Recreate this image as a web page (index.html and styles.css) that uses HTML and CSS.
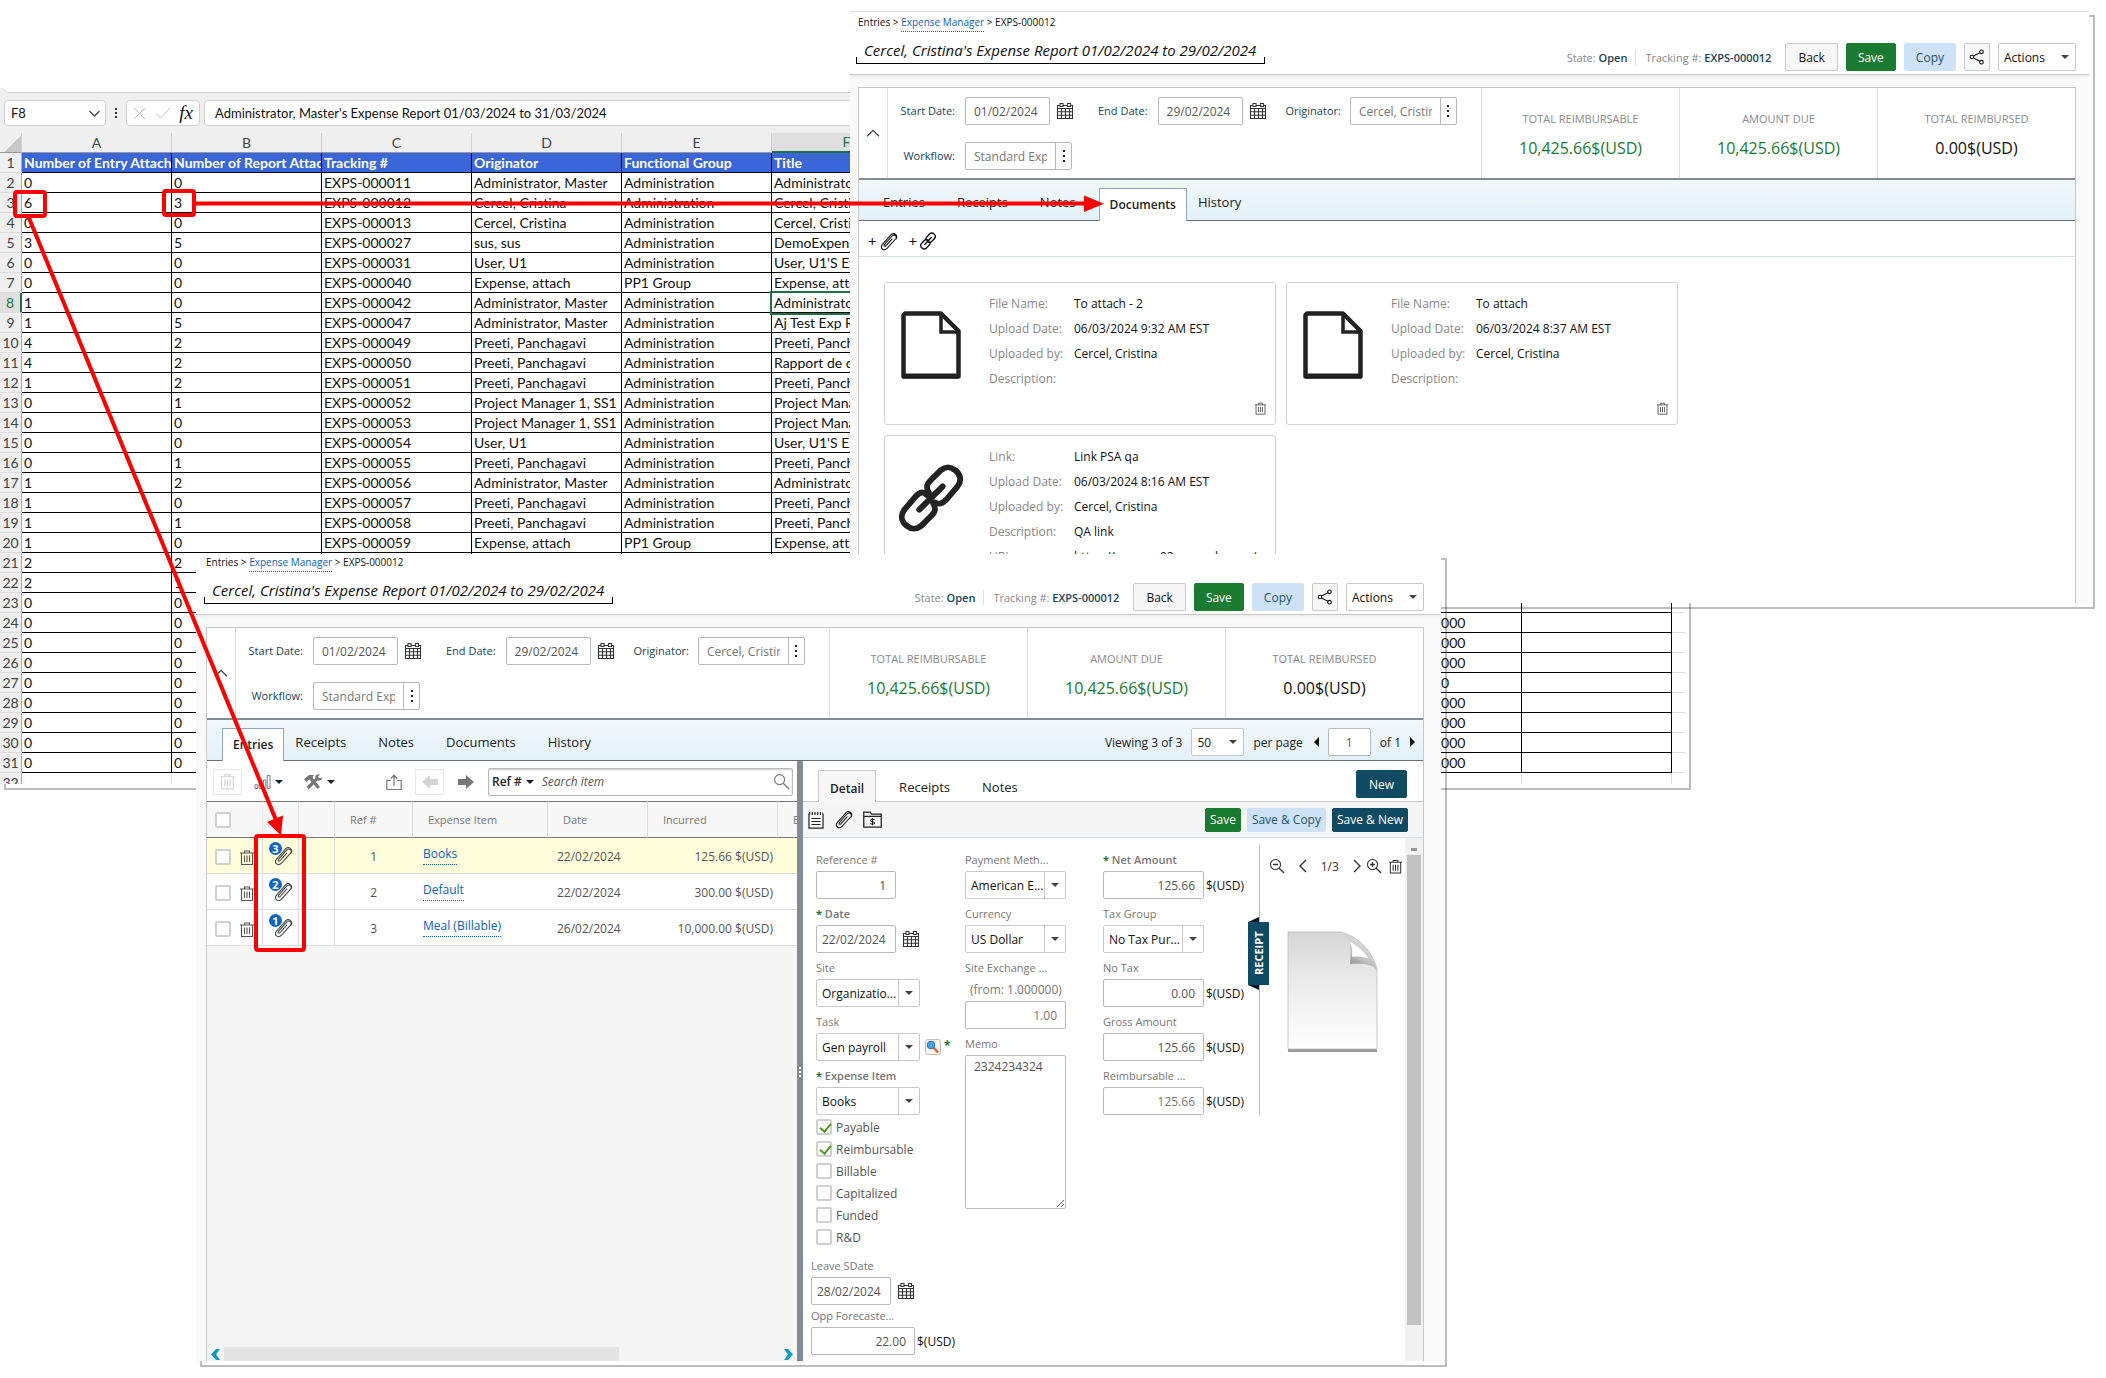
FILE: index.html
```html
<!DOCTYPE html>
<html lang="en">
<head>
  <meta charset="UTF-8" />
  <meta name="viewport" content="width=device-width, initial-scale=1.0"/>
  <title>Expense Manager - Attachments</title>
  <link rel="stylesheet" href="styles.css">
</head>
<body>
  <!-- ICONS -->
  <svg class="sprite" width="0" height="0" aria-hidden="true">
    <symbol id="i-cal" viewBox="0 0 18 18"><path d="M1.5 3.5h15v13h-15zM1.500 6.500h15M1.500 9.800h15M1.500 13.200h15M5.500 6.500v10M9.500 6.500v10M13.500 6.500v10" fill="none" stroke="currentColor" stroke-width="1.1"/><path d="M4 1.500h3v3H4zM11.500 1.500h3v3h-3z" fill="#fff" stroke="currentColor" stroke-width="1.1"/></symbol>
    <symbol id="i-trash" viewBox="0 0 16 16"><path d="M1 3.5h14M5.5 3.5v-2h5v2M2.5 3.5v11.5h11v-11.5M5.5 6v6.5M8 6v6.5M10.5 6v6.5" fill="none" stroke="currentColor" stroke-width="1.1"/></symbol>
    <symbol id="i-clip" viewBox="0 0 20 20"><path d="M13.800 7.200l-6.600 7.300c-1.200 1.300-2.600 0-1.500-1.300l8-9c2.500-2.700 6 .3 3.700 3.200l-8.900 9.800c-3.400 3.600-8-.3-4.900-4.200l6.900-7.700M10.500 5.300l2.500-2.800c2.800-2.600 7.400 1.200 4.900 4.800" fill="none" stroke="currentColor" stroke-width="1.1" stroke-linecap="round"/></symbol>
    <symbol id="i-link" viewBox="0 0 64 64"><g fill="none" stroke="currentColor" stroke-width="5.5" stroke-linecap="round" stroke-linejoin="round"><path d="M30 27c-3-5-2-8 1-11l10-10c5-4 9-4 14 0s6 10 2 15L46 34c-4 4-7 4-11 2"/><path d="M34 37c3 5 2 8-1 11L23 58c-5 4-9 4-14 0s-6-10-2-15l11-13c4-4 7-4 10-1"/><path d="M43 21L21 43"/></g></symbol>
    <symbol id="i-chain" viewBox="0 0 18 18"><g fill="none" stroke="currentColor" stroke-width="1.4" stroke-linecap="round"><path d="M8 8.500c-1.500-1.500-1.200-2.500-.2-3.500l2.700-3c1.500-1.500 3-1.300 4.500 0s1.800 3 .5 4.500l-2.800 3c-1.200 1.200-2.200 1.200-3.500.5"/><path d="M10 9.500c1.500 1.500 1.200 2.500.2 3.500l-2.700 3c-1.500 1.500-3 1.300-4.500 0s-1.800-3-.5-4.500l2.800-3c1.200-1.200 2.200-1.200 3.500-.5"/><path d="M12.300 5.500L5.700 12.500"/></g></symbol>
    <symbol id="i-file" viewBox="0 0 60 68"><path d="M4 2.500h36L57.500 20v45.500H2.500V4z" fill="none" stroke="currentColor" stroke-width="4.5" stroke-linejoin="round"/><path d="M40 3v18h17" fill="none" stroke="currentColor" stroke-width="3.5"/><path d="M2 65h56" stroke="currentColor" stroke-width="5"/></symbol>
    <symbol id="i-share" viewBox="0 0 16 16"><g fill="none" stroke="currentColor" stroke-width="1.1"><circle cx="12.5" cy="2.8" r="1.8"/><circle cx="3" cy="8" r="1.8"/><circle cx="12.5" cy="13.2" r="1.8"/><path d="M4.6 7.1l6.3-3.4M4.6 8.9l6.3 3.4"/></g></symbol>
    <symbol id="i-up" viewBox="0 0 14 8"><path d="M1 7.3l6-6 6 6" fill="none" stroke="currentColor" stroke-width="1.3"/></symbol>
    <symbol id="i-left" viewBox="0 0 8 14"><path d="M7 1L1 7l6 6" fill="none" stroke="currentColor" stroke-width="1.4"/></symbol>
    <symbol id="i-right" viewBox="0 0 8 14"><path d="M1 1l6 6-6 6" fill="none" stroke="currentColor" stroke-width="1.4"/></symbol>
    <symbol id="i-search" viewBox="0 0 18 18"><circle cx="7" cy="7" r="5.3" fill="none" stroke="currentColor" stroke-width="1.2"/><path d="M11 11l6 6" stroke="currentColor" stroke-width="1.4"/></symbol>
    <symbol id="i-out" viewBox="0 0 16 16"><circle cx="6.5" cy="6.5" r="5" fill="none" stroke="currentColor" stroke-width="1.1"/><path d="M10.2 10.2L15 15M4 6.5h5" stroke="currentColor" stroke-width="1.3"/></symbol>
    <symbol id="i-in" viewBox="0 0 16 16"><circle cx="6.5" cy="6.5" r="5" fill="none" stroke="currentColor" stroke-width="1.1"/><path d="M10.2 10.2L15 15M4 6.5h5M6.5 4v5" stroke="currentColor" stroke-width="1.3"/></symbol>
    <symbol id="i-chart" viewBox="0 0 18 16"><path d="M1 15.5v-4h3v4zM5.5 15.5v-6h3v6zM10 15.5v-9h2.5v9zM14 15.5v-14h3v14z" fill="none" stroke="currentColor"/></symbol>
    <symbol id="i-tools" viewBox="0 0 20 16"><path d="M1 5l5-4h5L9.5 3.5 17 13l-2.5 2L6.5 5.5 3.5 8z" fill="currentColor"/><path d="M19 3.5l-3 .8-1-1.800L17 .5c-3-.8-5.300 1-4.600 3.700L3.500 12.800l2.200 2.600 8.700-8.900c2.800.6 5-1 4.600-3z" fill="currentColor"/></symbol>
    <symbol id="i-export" viewBox="0 0 16 16"><path d="M5 6.5H.8v9h14.400v-9H11M8 12V1.500M4.800 4.500L8 1.200l3.200 3.300" fill="none" stroke="currentColor" stroke-width="1.2"/></symbol>
    <symbol id="i-prev" viewBox="0 0 16 14"><path d="M0 7l8-7v4h8v6H8v4z" fill="currentColor"/></symbol>
    <symbol id="i-next" viewBox="0 0 16 14"><path d="M16 7L8 0v4H0v6h8v4z" fill="currentColor"/></symbol>
    <symbol id="i-note" viewBox="0 0 16 18"><path d="M1 2.5v14.700h14V2.500M3.500 7.500h9M3.500 10.500h9M3.500 13.500h9" fill="none" stroke="currentColor" stroke-width="1.2"/><path d="M1 2.500h14" stroke="currentColor" stroke-width="3" stroke-dasharray="1.200 1.500"/></symbol>
    <symbol id="i-folder" viewBox="0 0 18 16"><path d="M.7 15.300V1h6l1.500 2H17.300v12.300zM.7 5h16.600" fill="none" stroke="currentColor" stroke-width="1.2"/><path d="M11 8.300c-1-1-3.700-.8-3.700.6 0 1.600 3.700.7 3.700 2.300 0 1.400-2.900 1.500-3.900.5M9 6.800v6.700" fill="none" stroke="currentColor"/></symbol>
    <symbol id="i-page" viewBox="0 0 92 122">
      <linearGradient id="pg" x1="0" y1="0" x2="0" y2="1"><stop offset="0" stop-color="#d6d6d6"/><stop offset=".5" stop-color="#eee"/><stop offset="1" stop-color="#fff"/></linearGradient>
      <linearGradient id="curl" x1="0" y1="1" x2=".7" y2="0"><stop offset="0" stop-color="#6a6a6a"/><stop offset=".45" stop-color="#bbb"/><stop offset="1" stop-color="#f4f4f4"/></linearGradient>
      <path d="M1 3h53c18 5 31 18 36 37v81H1z" fill="#999"/>
      <path d="M1 1h53c18 5 31 18 36 37v80H1z" fill="url(#pg)" stroke="#bbb" stroke-width=".8"/>
      <path d="M54 1c9 4 11 16 9 32 13-1 22 0 27 6C85 20 72 6 54 1z" fill="url(#curl)"/>
      <path d="M62 10c3 5 4 10 3 16 7-1 12 0 17 2-4-7-11-13-20-18z" fill="#fff"/>
    </symbol>
  </svg>

  <main class="desktop">
    <!-- SPREADSHEET -->
    <section class="window sheet-window">
      <div class="window-body sheet">
        <div class="ribbon-edge"></div>
        <div class="formula-bar">
          <div class="name-box"><input type="text" value="F8" aria-label="Name box"><svg width="11" height="7"><path d="M.5 1l5 5 5-5" fill="none" stroke="#444" stroke-width="1.3"/></svg></div>
          <span class="fx-dots"></span>
          <div class="fx-box">
            <svg width="13" height="13"><path d="M1 1l11 11M12 1L1 12" stroke="#bbb" fill="none"/></svg>
            <svg width="16" height="12"><path d="M1 6.500l4.500 4.500L15 1" stroke="#bbb" fill="none"/></svg>
            <i>fx</i>
          </div>
          <input class="fx-input" type="text" value="Administrator, Master's Expense Report 01/03/2024 to 31/03/2024" aria-label="Formula">
        </div>
        <table class="grid">
          <colgroup><col class="c-num"><col span="10" class="c-data"><col class="c-data"><col></colgroup>
          <thead>
            <tr><th class="corner"></th><th>A</th><th>B</th><th>C</th><th>D</th><th>E</th><th class="sel">F</th><th colspan="3"></th><th></th><th></th><th></th></tr>
          </thead>
          <tbody>
            <tr class="heads"><th>1</th><td>Number of Entry Attachm</td><td>Number of Report Attach</td><td>Tracking #</td><td>Originator</td><td>Functional Group</td><td>Title</td><td colspan="3"></td><td></td><td></td><td></td></tr>
            <tr><th>2</th><td>0</td><td>0</td><td>EXPS-000011</td><td>Administrator, Master</td><td>Administration</td><td>Administrator</td><td colspan="3"></td><td></td><td></td><td></td></tr>
            <tr><th>3</th><td>6</td><td>3</td><td>EXPS-000012</td><td>Cercel, Cristina</td><td>Administration</td><td>Cercel, Cristina</td><td colspan="3"></td><td></td><td></td><td></td></tr>
            <tr><th>4</th><td>0</td><td>0</td><td>EXPS-000013</td><td>Cercel, Cristina</td><td>Administration</td><td>Cercel, Cristina</td><td colspan="3"></td><td></td><td></td><td></td></tr>
            <tr><th>5</th><td>3</td><td>5</td><td>EXPS-000027</td><td>sus, sus</td><td>Administration</td><td>DemoExpense</td><td colspan="3"></td><td></td><td></td><td></td></tr>
            <tr><th>6</th><td>0</td><td>0</td><td>EXPS-000031</td><td>User, U1</td><td>Administration</td><td>User, U1'S Expense</td><td colspan="3"></td><td></td><td></td><td></td></tr>
            <tr><th>7</th><td>0</td><td>0</td><td>EXPS-000040</td><td>Expense, attach</td><td>PP1 Group</td><td>Expense, attach</td><td colspan="3"></td><td></td><td></td><td></td></tr>
            <tr class="current"><th>8</th><td>1</td><td>0</td><td>EXPS-000042</td><td>Administrator, Master</td><td>Administration</td><td class="active-cell">Administrator</td><td colspan="3"></td><td></td><td></td><td></td></tr>
            <tr><th>9</th><td>1</td><td>5</td><td>EXPS-000047</td><td>Administrator, Master</td><td>Administration</td><td>Aj Test Exp Report</td><td colspan="3"></td><td></td><td></td><td></td></tr>
            <tr><th>10</th><td>4</td><td>2</td><td>EXPS-000049</td><td>Preeti, Panchagavi</td><td>Administration</td><td>Preeti, Panchagavi</td><td colspan="3"></td><td></td><td></td><td></td></tr>
            <tr><th>11</th><td>4</td><td>2</td><td>EXPS-000050</td><td>Preeti, Panchagavi</td><td>Administration</td><td>Rapport de dépenses</td><td colspan="3"></td><td></td><td></td><td></td></tr>
            <tr><th>12</th><td>1</td><td>2</td><td>EXPS-000051</td><td>Preeti, Panchagavi</td><td>Administration</td><td>Preeti, Panchagavi</td><td colspan="3"></td><td></td><td></td><td></td></tr>
            <tr><th>13</th><td>0</td><td>1</td><td>EXPS-000052</td><td>Project Manager 1, SS1</td><td>Administration</td><td>Project Manager</td><td colspan="3"></td><td></td><td></td><td></td></tr>
            <tr><th>14</th><td>0</td><td>0</td><td>EXPS-000053</td><td>Project Manager 1, SS1</td><td>Administration</td><td>Project Manager</td><td colspan="3"></td><td></td><td></td><td></td></tr>
            <tr><th>15</th><td>0</td><td>0</td><td>EXPS-000054</td><td>User, U1</td><td>Administration</td><td>User, U1'S Expense</td><td colspan="3"></td><td></td><td></td><td></td></tr>
            <tr><th>16</th><td>0</td><td>1</td><td>EXPS-000055</td><td>Preeti, Panchagavi</td><td>Administration</td><td>Preeti, Panchagavi</td><td colspan="3"></td><td></td><td></td><td></td></tr>
            <tr><th>17</th><td>1</td><td>2</td><td>EXPS-000056</td><td>Administrator, Master</td><td>Administration</td><td>Administrator</td><td colspan="3"></td><td></td><td></td><td></td></tr>
            <tr><th>18</th><td>1</td><td>0</td><td>EXPS-000057</td><td>Preeti, Panchagavi</td><td>Administration</td><td>Preeti, Panchagavi</td><td colspan="3"></td><td></td><td></td><td></td></tr>
            <tr><th>19</th><td>1</td><td>1</td><td>EXPS-000058</td><td>Preeti, Panchagavi</td><td>Administration</td><td>Preeti, Panchagavi</td><td colspan="3"></td><td></td><td></td><td></td></tr>
            <tr><th>20</th><td>1</td><td>0</td><td>EXPS-000059</td><td>Expense, attach</td><td>PP1 Group</td><td>Expense, attach</td><td colspan="3"></td><td></td><td></td><td></td></tr>
            <tr><th>21</th><td>2</td><td>2</td><td></td><td></td><td></td><td></td><td colspan="3"></td><td></td><td></td><td></td></tr>
            <tr><th>22</th><td>2</td><td>1</td><td></td><td></td><td></td><td></td><td colspan="3"></td><td></td><td></td><td></td></tr>
            <tr><th>23</th><td>0</td><td>0</td><td></td><td></td><td></td><td></td><td colspan="3"></td><td></td><td></td><td></td></tr>
            <tr><th>24</th><td>0</td><td>0</td><td></td><td></td><td></td><td></td><td colspan="3"></td><td class="rate">000</td><td></td><td></td></tr>
            <tr><th>25</th><td>0</td><td>0</td><td></td><td></td><td></td><td></td><td colspan="3"></td><td class="rate">000</td><td></td><td></td></tr>
            <tr><th>26</th><td>0</td><td>0</td><td></td><td></td><td></td><td></td><td colspan="3"></td><td class="rate">000</td><td></td><td></td></tr>
            <tr><th>27</th><td>0</td><td>0</td><td></td><td></td><td></td><td></td><td colspan="3"></td><td class="rate">0</td><td></td><td></td></tr>
            <tr><th>28</th><td>0</td><td>0</td><td></td><td></td><td></td><td></td><td colspan="3"></td><td class="rate">000</td><td></td><td></td></tr>
            <tr><th>29</th><td>0</td><td>0</td><td></td><td></td><td></td><td></td><td colspan="3"></td><td class="rate">000</td><td></td><td></td></tr>
            <tr><th>30</th><td>0</td><td>0</td><td></td><td></td><td></td><td></td><td colspan="3"></td><td class="rate">000</td><td></td><td></td></tr>
            <tr><th>31</th><td>0</td><td>0</td><td></td><td></td><td></td><td></td><td colspan="3"></td><td class="rate">000</td><td></td><td></td></tr>
            <tr class="blank"><th>32</th><td></td><td></td><td></td><td></td><td></td><td></td><td colspan="3"></td><td></td><td></td><td></td></tr>
          </tbody>
        </table>
      </div>
    </section>

    <!-- REPORT: DOCUMENTS TAB -->
    <section class="window docs-window">
      <div class="window-body app">
        <header class="app-header">
          <div class="heading">
            <nav class="crumbs">Entries &gt; <a href="#">Expense Manager</a> &gt; EXPS-000012</nav>
            <input class="report-title" type="text" aria-label="Report title" value="Cercel, Cristina's Expense Report 01/02/2024 to 29/02/2024">
          </div>
          <div class="header-actions">
            <span class="meta">State: <b>Open</b></span><span class="meta sep">Tracking #: <b>EXPS-000012</b></span>
            <button class="btn">Back</button>
            <button class="btn green">Save</button>
            <button class="btn pale">Copy</button>
            <button class="btn icon-btn" aria-label="Share"><svg width="16" height="16"><use href="#i-share"/></svg></button>
            <span class="select actions"><select aria-label="Actions"><option>Actions</option></select></span>
          </div>
        </header>
        <div class="panel">
          <div class="summary">
            <button class="collapse" aria-label="Collapse"><svg width="14" height="8"><use href="#i-up"/></svg></button>
            <div class="fields">
              <div class="line">
                <label class="first" for="d-start">Start Date:</label><input class="box date" id="d-start" type="text" value="01/02/2024"><button class="cal" aria-label="Pick start date"><svg width="18" height="18"><use href="#i-cal"/></svg></button>
                <label class="end" for="d-end">End Date:</label><input class="box date" id="d-end" type="text" value="29/02/2024"><button class="cal" aria-label="Pick end date"><svg width="18" height="18"><use href="#i-cal"/></svg></button>
                <label class="orig" for="d-orig">Originator:</label><span class="lookup"><input id="d-orig" type="text" value="Cercel, Cristina"><button aria-label="Choose originator"></button></span>
              </div>
              <div class="line">
                <label class="first" for="d-flow">Workflow:</label><span class="lookup"><input id="d-flow" type="text" value="Standard Expense"><button aria-label="Choose workflow"></button></span>
              </div>
            </div>
            <div class="stat"><span>TOTAL REIMBURSABLE</span><strong class="pos">10,425.66$(USD)</strong></div>
            <div class="stat"><span>AMOUNT DUE</span><strong class="pos">10,425.66$(USD)</strong></div>
            <div class="stat"><span>TOTAL REIMBURSED</span><strong>0.00$(USD)</strong></div>
          </div>
          <nav class="tabs">
            <a href="#">Entries</a><a href="#">Receipts</a><a href="#">Notes</a><a href="#" class="active">Documents</a><a href="#">History</a>
          </nav>
          <div class="doc-tools">
            <button aria-label="Add file">+<svg width="19" height="19"><use href="#i-clip"/></svg></button>
            <button aria-label="Add link">+<svg width="18" height="18"><use href="#i-chain"/></svg></button>
          </div>
          <div class="cards">
            <article class="card">
              <svg width="60" height="68"><use href="#i-file"/></svg>
              <dl><dt>File Name:</dt><dd>To attach - 2</dd><dt>Upload Date:</dt><dd>06/03/2024 9:32 AM EST</dd><dt>Uploaded by:</dt><dd>Cercel, Cristina</dd><dt>Description:</dt><dd></dd></dl>
              <button class="del" aria-label="Delete"><svg width="13" height="13"><use href="#i-trash"/></svg></button>
            </article>
            <article class="card">
              <svg width="60" height="68"><use href="#i-file"/></svg>
              <dl><dt>File Name:</dt><dd>To attach</dd><dt>Upload Date:</dt><dd>06/03/2024 8:37 AM EST</dd><dt>Uploaded by:</dt><dd>Cercel, Cristina</dd><dt>Description:</dt><dd></dd></dl>
              <button class="del" aria-label="Delete"><svg width="13" height="13"><use href="#i-trash"/></svg></button>
            </article>
            <article class="card link-card">
              <svg width="68" height="68"><use href="#i-link"/></svg>
              <dl><dt>Link:</dt><dd>Link PSA qa</dd><dt>Upload Date:</dt><dd>06/03/2024 8:16 AM EST</dd><dt>Uploaded by:</dt><dd>Cercel, Cristina</dd><dt>Description:</dt><dd>QA link</dd><dt>URL:</dt><dd>https://www.qa92.example.com/</dd></dl>
            </article>
          </div>
        </div>
      </div>
    </section>

    <!-- REPORT: ENTRIES TAB -->
    <section class="window entries-window">
      <div class="window-body app">
        <header class="app-header">
          <div class="heading">
            <nav class="crumbs">Entries &gt; <a href="#">Expense Manager</a> &gt; EXPS-000012</nav>
            <input class="report-title" type="text" aria-label="Report title" value="Cercel, Cristina's Expense Report 01/02/2024 to 29/02/2024">
          </div>
          <div class="header-actions">
            <span class="meta">State: <b>Open</b></span><span class="meta sep">Tracking #: <b>EXPS-000012</b></span>
            <button class="btn">Back</button>
            <button class="btn green">Save</button>
            <button class="btn pale">Copy</button>
            <button class="btn icon-btn" aria-label="Share"><svg width="16" height="16"><use href="#i-share"/></svg></button>
            <span class="select actions"><select aria-label="Actions"><option>Actions</option></select></span>
          </div>
        </header>
        <div class="panel">
          <div class="summary">
            <button class="collapse" aria-label="Collapse"><svg width="14" height="8"><use href="#i-up"/></svg></button>
            <div class="fields">
              <div class="line">
                <label class="first" for="e-start">Start Date:</label><input class="box date" id="e-start" type="text" value="01/02/2024"><button class="cal" aria-label="Pick start date"><svg width="18" height="18"><use href="#i-cal"/></svg></button>
                <label class="end" for="e-end">End Date:</label><input class="box date" id="e-end" type="text" value="29/02/2024"><button class="cal" aria-label="Pick end date"><svg width="18" height="18"><use href="#i-cal"/></svg></button>
                <label class="orig" for="e-orig">Originator:</label><span class="lookup"><input id="e-orig" type="text" value="Cercel, Cristina"><button aria-label="Choose originator"></button></span>
              </div>
              <div class="line">
                <label class="first" for="e-flow">Workflow:</label><span class="lookup"><input id="e-flow" type="text" value="Standard Expense"><button aria-label="Choose workflow"></button></span>
              </div>
            </div>
            <div class="stat"><span>TOTAL REIMBURSABLE</span><strong class="pos">10,425.66$(USD)</strong></div>
            <div class="stat"><span>AMOUNT DUE</span><strong class="pos">10,425.66$(USD)</strong></div>
            <div class="stat"><span>TOTAL REIMBURSED</span><strong>0.00$(USD)</strong></div>
          </div>
          <nav class="tabs">
            <a href="#" class="active">Entries</a><a href="#">Receipts</a><a href="#">Notes</a><a href="#">Documents</a><a href="#">History</a>
            <div class="pager">
              <label for="per">Viewing 3 of 3</label>
              <span class="select per"><select id="per"><option>50</option></select></span>
              <label for="page">per page</label>
              <button class="tri back" aria-label="Previous page"></button>
              <input class="box" id="page" type="text" value="1">
              <span>of 1</span>
              <button class="tri" aria-label="Next page"></button>
            </div>
          </nav>
          <div class="split">
            <!-- entry list -->
            <div class="list">
              <div class="list-tools">
                <button class="framed" aria-label="Delete" disabled><svg width="17" height="17"><use href="#i-trash"/></svg></button>
                <button class="drop t-chart" aria-label="Charts"><svg width="17" height="15"><use href="#i-chart"/></svg></button>
                <button class="drop t-tools" aria-label="Tools"><svg width="20" height="16"><use href="#i-tools"/></svg></button>
                <button class="t-export" aria-label="Export"><svg width="16" height="16"><use href="#i-export"/></svg></button>
                <button class="framed" aria-label="Previous" disabled><svg width="16" height="14"><use href="#i-prev"/></svg></button>
                <button class="t-next" aria-label="Next"><svg width="16" height="14"><use href="#i-next"/></svg></button>
                <div class="search"><button class="drop ref">Ref #</button><input type="text" placeholder="Search item" aria-label="Search item"><svg width="17" height="17"><use href="#i-search"/></svg></div>
              </div>
              <table class="entries">
                <colgroup><col class="w-a"><col class="w-b"><col class="w-b"><col class="w-ref"><col class="w-item"><col class="w-date"><col class="w-inc"><col></colgroup>
                <thead>
                  <tr><th><input type="checkbox" aria-label="Select all"></th><th></th><th></th><th>Ref #</th><th>Expense Item</th><th>Date</th><th>Incurred</th><th>Bill</th></tr>
                </thead>
                <tbody>
                  <tr class="picked"><td><input type="checkbox" aria-label="Select entry 1"><button aria-label="Delete entry 1"><svg width="16" height="17"><use href="#i-trash"/></svg></button></td><td class="att"><svg width="20" height="20"><use href="#i-clip"/></svg><span class="badge">3</span></td><td></td><td class="num">1</td><td class="item"><a href="#">Books</a></td><td class="day">22/02/2024</td><td class="sum">125.66 $(USD)</td><td></td></tr>
                  <tr><td><input type="checkbox" aria-label="Select entry 2"><button aria-label="Delete entry 2"><svg width="16" height="17"><use href="#i-trash"/></svg></button></td><td class="att"><svg width="20" height="20"><use href="#i-clip"/></svg><span class="badge">2</span></td><td></td><td class="num">2</td><td class="item"><a href="#">Default</a></td><td class="day">22/02/2024</td><td class="sum">300.00 $(USD)</td><td></td></tr>
                  <tr><td><input type="checkbox" aria-label="Select entry 3"><button aria-label="Delete entry 3"><svg width="16" height="17"><use href="#i-trash"/></svg></button></td><td class="att"><svg width="20" height="20"><use href="#i-clip"/></svg><span class="badge">1</span></td><td></td><td class="num">3</td><td class="item"><a href="#">Meal (Billable)</a></td><td class="day">26/02/2024</td><td class="sum">10,000.00 $(USD)</td><td></td></tr>
                </tbody>
              </table>
              <div class="h-scroll">
                <svg width="10" height="11"><path d="M5 0h4L5 5.500 9 11H5L0 5.500z"/></svg>
                <div class="h-track"><div class="h-thumb"></div></div>
                <svg width="10" height="11"><path d="M5 0H1l4 5.500L1 11h4l5-5.500z"/></svg>
              </div>
            </div>
            <div class="splitter"></div>
            <!-- entry detail -->
            <div class="detail">
              <nav class="sub-tabs">
                <a href="#" class="active">Detail</a><a href="#">Receipts</a><a href="#">Notes</a>
                <button class="btn navy">New</button>
              </nav>
              <div class="detail-tools">
                <button aria-label="Notes"><svg width="16" height="18"><use href="#i-note"/></svg></button>
                <button aria-label="Attachments"><svg width="19" height="19"><use href="#i-clip"/></svg></button>
                <button aria-label="Project billing"><svg width="19" height="17"><use href="#i-folder"/></svg></button>
                <button class="btn small green">Save</button>
                <button class="btn small pale">Save &amp; Copy</button>
                <button class="btn small navy">Save &amp; New</button>
              </div>
              <div class="scroll-area">
                <form class="entry-form">
                  <div class="col">
                    <div class="field"><label for="f-ref">Reference #</label><input class="box short num" id="f-ref" type="text" value="1"></div>
                    <div class="field"><label class="req" for="f-date">Date</label><div class="line"><input class="box short" id="f-date" type="text" value="22/02/2024"><button type="button" class="cal" aria-label="Pick date"><svg width="18" height="18"><use href="#i-cal"/></svg></button></div></div>
                    <div class="field"><label for="f-site">Site</label><span class="select split-arrow"><select id="f-site"><option>Organizatio...</option></select></span></div>
                    <div class="field"><label for="f-task">Task</label><div class="line"><span class="select split-arrow"><select id="f-task"><option>Gen payroll</option></select></span><button type="button" class="find" aria-label="Find task"><svg width="16" height="16"><rect x=".5" y=".5" width="15" height="15" rx="2" fill="#f4f1ea" stroke="#c5beb0"/><path d="M8.500 8.500l4.500 5" stroke="#e2672d" stroke-width="2.5"/><circle cx="6" cy="6" r="3.8" fill="#4aa3e8" stroke="#2b6fb8"/></svg></button><span class="star">*</span></div></div>
                    <div class="field"><label class="req" for="f-item">Expense Item</label><span class="select split-arrow"><select id="f-item"><option>Books</option></select></span></div>
                    <div class="checks">
                      <label><input type="checkbox" checked>Payable</label>
                      <label><input type="checkbox" checked>Reimbursable</label>
                      <label><input type="checkbox">Billable</label>
                      <label><input type="checkbox">Capitalized</label>
                      <label><input type="checkbox">Funded</label>
                      <label><input type="checkbox">R&amp;D</label>
                    </div>
                  </div>
                  <div class="col">
                    <div class="field"><label for="f-pay">Payment Meth...</label><span class="select split-arrow"><select id="f-pay"><option>American E...</option></select></span></div>
                    <div class="field"><label for="f-cur">Currency</label><span class="select split-arrow"><select id="f-cur"><option>US Dollar</option></select></span></div>
                    <div class="field"><label for="f-rate">Site Exchange ...</label><span class="hint">(from: 1.000000)</span><input class="box num dim" id="f-rate" type="text" value="1.00"></div>
                    <div class="field"><label for="f-memo">Memo</label><textarea class="box" id="f-memo">2324234324</textarea></div>
                  </div>
                  <div class="col amounts">
                    <div class="field"><label class="req" for="f-net">Net Amount</label><div class="line"><input class="box num" id="f-net" type="text" value="125.66"><span>$(USD)</span></div></div>
                    <div class="field"><label for="f-tax">Tax Group</label><span class="select split-arrow"><select id="f-tax"><option>No Tax Pur...</option></select></span></div>
                    <div class="field"><label for="f-notax">No Tax</label><div class="line"><input class="box num" id="f-notax" type="text" value="0.00"><span>$(USD)</span></div></div>
                    <div class="field"><label for="f-gross">Gross Amount</label><div class="line"><input class="box num" id="f-gross" type="text" value="125.66"><span>$(USD)</span></div></div>
                    <div class="field"><label for="f-reim">Reimbursable ...</label><div class="line"><input class="box num dim" id="f-reim" type="text" value="125.66"><span>$(USD)</span></div></div>
                  </div>
                  <aside class="receipt">
                    <div class="flag"><span>RECEIPT</span></div>
                    <div class="receipt-tools">
                      <button type="button" aria-label="Zoom out"><svg width="16" height="16"><use href="#i-out"/></svg></button>
                      <div class="steps">
                        <button type="button" aria-label="Previous receipt"><svg width="8" height="14"><use href="#i-left"/></svg></button>
                        <span>1/3</span>
                        <button type="button" aria-label="Next receipt"><svg width="8" height="14"><use href="#i-right"/></svg></button>
                      </div>
                      <button type="button" aria-label="Zoom in"><svg width="16" height="16"><use href="#i-in"/></svg></button>
                      <button type="button" aria-label="Delete receipt"><svg width="15" height="17"><use href="#i-trash"/></svg></button>
                    </div>
                    <svg class="page" width="92" height="122"><use href="#i-page"/></svg>
                  </aside>
                  <div class="extra">
                    <div class="field"><label for="f-leave">Leave SDate</label><div class="line"><input class="box short" id="f-leave" type="text" value="28/02/2024"><button type="button" class="cal" aria-label="Pick leave date"><svg width="18" height="18"><use href="#i-cal"/></svg></button></div></div>
                    <div class="field"><label for="f-opp">Opp Forecaste...</label><div class="line"><input class="box num opp" id="f-opp" type="text" value="22.00"><span>$(USD)</span></div></div>
                  </div>
                </form>
                <div class="v-track"><div class="v-thumb"></div></div>
              </div>
            </div>
          </div>
        </div>
      </div>
    </section>

    <!-- CALLOUTS -->
    <svg class="callouts" aria-hidden="true">
      <g fill="none" stroke="red" stroke-width="4">
        <rect x="15" y="192" width="30" height="24" rx="2"/>
        <rect x="164" y="191" width="30" height="24" rx="2"/>
        <rect x="256" y="836" width="48" height="114" rx="2"/>
        <path d="M196 203.500H1086M29 218L276 820"/>
      </g>
      <path d="M1084 195.500v16.500l20-8.200zM267 822l16-6.500-2 20z" fill="red"/>
    </svg>
  </main>
</body>
</html>
```
FILE: styles.css
```css
:root {
  --line: #c8c8c8;
  --soft-line: #d9e0e4;
  --text: #111;
  --muted: #777;
  --link: #0c5fbf;
  --green: #197b30;
  --navy: #0f4a63;
  --pale: #cde2f7;
  --slate: #818c96;
}

* {
  box-sizing: border-box;
}

body {
  margin: 0;
  background: #fff;
  color: var(--text);
  font-family: "Open Sans", sans-serif;
  font-size: 12px;
}

button, input, select, textarea {
  font: inherit;
  color: inherit;
  margin: 0;
}

button {
  background: none;
  border: 0;
  padding: 0;
}

input, select, textarea {
  border: 0;
  outline: 0;
  min-width: 0;
  background: none;
}

svg {
  display: block;
}

.sprite {
  position: absolute;
}

.desktop {
  position: relative;
  min-height: 100vh;
  overflow: hidden;
}

/* windows */
.window {
  position: absolute;
}

.window::before {
  content: "";
  position: absolute;
  top: 4px;
  left: 4px;
  right: -6px;
  bottom: -6px;
  border: 2px solid rgba(0, 0, 0, 0.26);
}

.window-body {
  position: relative;
  height: 100%;
  overflow: hidden;
}

.sheet-window {
  left: 0;
  right: 421px;
  top: 88px;
  height: 696px;
}

.docs-window {
  left: 850px;
  right: 17px;
  top: 11px;
  height: 592px;
}

.entries-window {
  left: 196px;
  right: 665px;
  top: 554px;
  height: 807px;
}

.callouts {
  position: absolute;
  inset: 0;
  width: 100%;
  height: 100%;
  pointer-events: none;
}

/* spreadsheet */
.sheet {
  background: #efefef;
  font-family: Lato, sans-serif;
  font-size: 14px;
  font-variant-ligatures: none;
}

.ribbon-edge {
  height: 5px;
  margin-left: 4px;
  background: #fff;
  border-bottom: 1px solid #cfcfcf;
  border-bottom-left-radius: 5px;
}

.formula-bar {
  display: flex;
  align-items: center;
  height: 40px;
  padding: 0 0 0 4px;
  background: #efefef;
}

.name-box, .fx-box, .fx-input {
  height: 26px;
  background: #fff;
  border: 1px solid #d0d0d0;
  border-radius: 4px;
  font-size: 13px;
}

.name-box {
  display: flex;
  align-items: center;
  width: 102px;
  padding: 0 5px 0 6px;
}

.name-box input {
  flex: 1;
  padding: 0;
}

.fx-dots {
  width: 2px;
  height: 10px;
  margin: 0 9px;
  background: repeating-linear-gradient(#333 0 2px, transparent 2px 4px);
}

.fx-box {
  display: flex;
  align-items: center;
  gap: 9px;
  width: 74px;
  margin-right: 4px;
  padding: 0 6px;
}

.fx-box i {
  font: italic 19px "Liberation Serif", serif;
}

.fx-input {
  flex: 1;
  padding: 0 10px;
}

.grid {
  width: 100%;
  table-layout: fixed;
  border-collapse: separate;
  border-spacing: 0;
}

.c-num {
  width: 22px;
}

.c-data {
  width: 150px;
}

.grid th {
  height: 20px;
  padding: 0;
  background: #efefef;
  border-right: 1px solid #aaa;
  border-bottom: 1px solid #ddd;
  color: #444;
  font-weight: normal;
  line-height: 18px;
}

.grid thead th {
  border-right-color: #d0d0d0;
  border-bottom-color: #999;
}

.grid .corner {
  background: linear-gradient(135deg, #efefef 60%, #c8c8c8 60%);
}

.grid thead .sel {
  background: #dfdfdf;
  color: #1e7145;
  border-bottom: 2px solid #1e7145;
}

.grid td {
  height: 20px;
  padding: 0 0 0 2px;
  background: #fff;
  border-right: 1px solid #000;
  border-bottom: 1px solid #000;
  line-height: 19px;
  white-space: nowrap;
  overflow: hidden;
}

.grid td:last-child {
  border-color: #ddd;
  border-right: 0;
}

.grid .heads td {
  background: #3a66d7;
  color: #fff;
  font-weight: bold;
}

.grid .current th {
  background: #dfdfdf;
  color: #1e7145;
  border-right: 2px solid #1e7145;
}

.grid .active-cell {
  outline: 2px solid #1e7145;
}

.grid .rate {
  padding-left: 69px;
}

.grid .blank td {
  border-color: #ddd;
}

/* report app */
.app {
  display: flex;
  flex-direction: column;
  background: #f9f9f9;
}

.app-header {
  display: flex;
  align-items: flex-end;
  justify-content: space-between;
  flex: none;
  height: 61px;
  padding: 0 13px 3px 6px;
  background: #fff;
  border-bottom: 1px solid var(--line);
  box-shadow: 0 2px 3px #eee;
}

.docs-window .app-header {
  height: 64px;
  border-top: 1px solid #ddd;
}

.entries-window .app-header {
  padding: 0 17px 3px 8px;
}

.heading {
  align-self: flex-end;
  padding-bottom: 7px;
}

.crumbs {
  padding-left: 2px;
  font-size: 10px;
  line-height: 16px;
}

.crumbs a, .item a {
  color: var(--link);
  text-decoration: none;
  border-bottom: 1px dotted var(--link);
  padding-bottom: 2px;
}

.report-title {
  display: block;
  width: 409px;
  height: 25px;
  margin-top: 9px;
  padding: 0 8px 2px;
  font-size: 15px;
  font-style: italic;
  background:
    linear-gradient(#000, #000) left bottom / 1px 6px no-repeat,
    linear-gradient(#000, #000) right bottom / 1px 6px no-repeat;
  border-bottom: 1px solid #000;
}

.header-actions {
  display: flex;
  align-items: center;
  gap: 8px;
}

.meta {
  color: #8a8a8a;
  font-size: 11px;
}

.meta b {
  color: #17445a;
  font-weight: 600;
}

.meta.sep {
  margin-right: 6px;
  padding-left: 9px;
  border-left: 1px solid var(--soft-line);
}

.btn {
  height: 28px;
  padding: 0 12px;
  border-radius: 2px;
  background: #f7f7f7;
  border: 1px solid var(--line);
}

.btn.green {
  padding: 0 11px;
  background: var(--green);
  border-color: var(--green);
  color: #fff;
}

.btn.pale {
  padding: 0 11px;
  background: var(--pale);
  border-color: var(--pale);
  color: #24516e;
}

.btn.navy {
  background: var(--navy);
  border-color: var(--navy);
  color: #fff;
}

.btn.icon-btn {
  width: 26px;
  padding: 0 4px;
}

.btn.small {
  height: 24px;
  padding: 0 4px;
}

.select {
  position: relative;
  display: block;
  height: 28px;
  background: #fff;
  border: 1px solid var(--line);
  border-radius: 2px;
}

.select select {
  width: 100%;
  height: 100%;
  padding: 0 5px;
  appearance: none;
}

/* drop-down arrow */
.select::after {
  content: "";
  position: absolute;
  right: 6px;
  top: 11px;
  border: 4px solid transparent;
  border-top-color: #444;
  border-bottom: 0;
  pointer-events: none;
}

.split-arrow::before {
  content: "";
  position: absolute;
  right: 20px;
  top: 0;
  bottom: 0;
  border-left: 1px solid var(--line);
}

.actions {
  width: 78px;
}

.box {
  height: 28px;
  padding: 0 8px;
  background: #fff;
  border: 1px solid #b9b9b9;
  border-radius: 2px;
  color: #555;
}

.num {
  text-align: right;
}

.dim {
  color: var(--muted);
}

.panel {
  display: flex;
  flex-direction: column;
  flex: 1;
  margin: 12px 13px 0 8px;
  background: #fff;
  border: 1px solid var(--line);
  border-bottom: 0;
}

.entries-window .panel {
  margin: 12px 17px 0 10px;
}

.summary {
  display: flex;
  border-bottom: 2px solid var(--slate);
}

.collapse {
  width: 29px;
  padding-left: 7px;
  border-right: 1px solid var(--soft-line);
  color: #444;
}

.fields {
  display: flex;
  flex: 1;
  flex-direction: column;
  gap: 17px;
  padding: 9px 0 8px;
}

.line {
  display: flex;
  align-items: center;
}

.fields label {
  margin-right: 10px;
  padding-bottom: 2px;
  color: #17445a;
  font-size: 11px;
  white-space: nowrap;
}

.fields .first {
  width: 67px;
  text-align: right;
}

.fields .end {
  margin-left: 24px;
}

.fields .orig {
  margin-left: 19px;
  margin-right: 9px;
}

.date {
  width: 85px;
}

.cal {
  margin-left: 6px;
  color: #333;
}

.lookup {
  display: flex;
  width: 107px;
  height: 28px;
  border: 1px solid #b9b9b9;
  border-radius: 2px;
}

.lookup input {
  flex: 1;
  margin: 0 8px;
  padding: 0;
  color: var(--muted);
}

.lookup button {
  width: 16px;
  border-left: 1px solid #b9b9b9;
  background: repeating-linear-gradient(#222 0 2px, transparent 2px 5px) center / 2px 12px no-repeat;
}

.stat {
  display: flex;
  flex-direction: column;
  align-items: center;
  width: 198px;
  padding-top: 23px;
  border-left: 1px solid var(--soft-line);
}

.stat span {
  color: #8a8a8a;
  font-size: 11px;
  line-height: 16px;
}

.stat strong {
  margin-top: 9px;
  font-size: 16px;
  font-weight: normal;
  line-height: 24px;
}

.stat .pos {
  color: var(--green);
}

.tabs {
  display: flex;
  flex: none;
  height: 41px;
  padding: 8px 8px 0 8px;
  background: linear-gradient(#f0f9fa, #e4f1f9);
  border-bottom: 1px solid #6b7078;
}

.tabs a, .sub-tabs a {
  padding: 0 16px;
  color: #222;
  font-size: 13px;
  line-height: 29px;
  text-decoration: none;
}

.tabs .active {
  height: 33px;
  margin: 0 -5px 0 7px;
  padding: 0 10px;
  background: #fff;
  border: 1px solid #8ea6c4;
  border-bottom: 0;
  font-size: 12px;
  font-weight: 600;
  line-height: 32px;
}

.pager {
  display: flex;
  align-items: center;
  gap: 9px;
  height: 28px;
  margin-left: auto;
  color: #222;
}

.per {
  width: 53px;
}

#page {
  width: 43px;
  text-align: center;
}

.tri {
  width: 5px;
  border: 5px solid transparent;
  border-left-color: #111;
  border-right: 0;
}

.tri.back {
  margin: 0 0 0 2px;
  border: 5px solid transparent;
  border-right-color: #111;
  border-left: 0;
}

/* documents */
.doc-tools {
  display: flex;
  gap: 11px;
  height: 36px;
  padding: 5px 0 0 9px;
  border-bottom: 1px solid var(--soft-line);
}

.doc-tools button {
  display: flex;
  align-items: center;
  gap: 2px;
  font-size: 15px;
}

.cards {
  display: grid;
  grid-template-columns: 392px 392px;
  gap: 10px;
  padding: 25px;
}

.card {
  position: relative;
  display: flex;
  align-items: flex-start;
  min-height: 143px;
  padding: 8px 16px;
  border: 1px solid #d2d2d2;
  border-radius: 3px;
}

.card > svg {
  flex: none;
  margin: 20px 28px 0 0;
  color: #222;
}

.link-card {
  padding-left: 12px;
}

.link-card > svg {
  margin-right: 24px;
}

.card dl {
  display: grid;
  grid-template-columns: 85px 1fr;
  margin: 0;
  line-height: 25px;
}

.card dt {
  color: #888;
}

.card dd {
  margin: 0;
}

.del {
  position: absolute;
  right: 8px;
  bottom: 9px;
  color: #555;
}

/* entries */
.split {
  display: flex;
  flex: 1;
}

.list {
  display: flex;
  flex-direction: column;
  width: 590px;
  background: #f5f5f5;
}

.list-tools {
  display: flex;
  align-items: center;
  height: 40px;
  padding: 1px 4px 0 6px;
  background: #fff;
  color: #777;
}

.framed {
  display: flex;
  align-items: center;
  justify-content: center;
  width: 29px;
  height: 26px;
  border: 1px solid #e8e8e8;
  color: #d5d5d5;
}

.drop {
  display: flex;
  align-items: center;
  gap: 4px;
}

.drop::after {
  content: "";
  border: 4px solid transparent;
  border-top-color: #123;
  border-bottom: 0;
}

.t-chart {
  margin-left: 12px;
}

.t-tools {
  margin-left: 20px;
}

.t-export {
  margin: 0 13px 0 51px;
}

.t-next {
  margin: 0 14px 0 14px;
}

.search {
  display: flex;
  align-items: center;
  flex: 1;
  height: 28px;
  padding: 0 2px 0 3px;
  border: 1px solid #b9b9b9;
  border-radius: 2px;
  box-shadow: inset 0 1px 2px #ccc;
}

.search input {
  flex: 1;
  padding: 0 8px;
}

.search input::placeholder {
  color: #555;
  font-style: italic;
}

.ref {
  color: #222;
  font-weight: 600;
}

.entries {
  width: 100%;
  table-layout: fixed;
  border-collapse: separate;
  border-spacing: 0;
}

.w-a { width: 56px; }
.w-b { width: 36px; }
.w-ref { width: 78px; }
.w-item { width: 135px; }
.w-date { width: 100px; }
.w-inc { width: 130px; }

.entries th {
  height: 37px;
  padding: 0 0 0 15px;
  border: solid #ddd;
  border-width: 1px 1px 1px 0;
  border-top-color: #777;
  border-bottom-color: #777;
  background: #f7f7f7;
  color: var(--muted);
  font-size: 11px;
  font-weight: normal;
  text-align: left;
  overflow: hidden;
}

.entries th:first-child {
  padding-left: 8px;
  border-right-color: #eee;
}

.entries th:last-child {
  border-right: 0;
}

.entries td {
  height: 36px;
  padding: 2px 0 0;
  background: #fff;
  border-bottom: 1px solid #ddd;
  color: #555;
}

.entries .picked td {
  background: #ffffdb;
}

.entries td:nth-child(-n+3) {
  border-right: 1px solid #ddd;
}

.entries td:first-child button {
  margin-left: 8px;
  color: #555;
  vertical-align: middle;
}

.entries td:first-child {
  padding-left: 8px;
}

input[type="checkbox"] {
  appearance: none;
  width: 16px;
  height: 16px;
  background: #fff;
  border: 2px solid #d0d0d0;
  border-radius: 2px;
  vertical-align: middle;
}

input[type="checkbox"]:checked::before {
  content: "";
  display: block;
  width: 5px;
  height: 9px;
  margin: 0 0 0 4px;
  border: solid #4c9a1a;
  border-width: 0 2px 2px 0;
  transform: rotate(40deg);
}

.entries .att {
  position: relative;
  padding: 0 0 0 10px;
  color: #444;
}

.badge {
  position: absolute;
  left: 6px;
  top: 4px;
  width: 13px;
  height: 13px;
  border-radius: 50%;
  background: #0b66c3;
  color: #fff;
  font-size: 11px;
  font-weight: bold;
  line-height: 13px;
  text-align: center;
}

.entries .num {
  padding-right: 36px;
}

.entries .item {
  padding: 0 0 4px 10px;
}

.entries .day {
  padding-left: 9px;
}

.entries .sum {
  padding-right: 5px;
  text-align: right;
}

.h-scroll {
  display: flex;
  align-items: center;
  gap: 3px;
  height: 14px;
  margin-top: auto;
  padding: 0 4px;
  fill: #0c9bc4;
}

.h-track {
  flex: 1;
  height: 14px;
}

.h-thumb {
  width: 71%;
  height: 14px;
  background: #e4e4e4;
}

.splitter {
  width: 6px;
  background:
    linear-gradient(#fff, #fff) center 310px / 2px 2px no-repeat,
    linear-gradient(#fff, #fff) center 314px / 2px 2px no-repeat,
    linear-gradient(#fff, #fff) center 306px / 2px 2px no-repeat,
    var(--slate);
}

.detail {
  display: flex;
  flex: 1;
  flex-direction: column;
}

.sub-tabs {
  display: flex;
  height: 41px;
  padding: 9px 16px 0 15px;
  border-bottom: 1px solid var(--line);
}

.sub-tabs a {
  line-height: 34px;
}

.sub-tabs .active {
  height: 32px;
  margin-right: 7px;
  padding: 0 11px;
  background: #f7f7f7;
  border: 1px solid var(--line);
  border-bottom: 0;
  font-size: 12px;
  font-weight: 600;
  line-height: 36px;
}

.sub-tabs .btn {
  margin-left: auto;
}

.detail-tools {
  display: flex;
  align-items: center;
  gap: 10px;
  height: 36px;
  padding: 0 15px 0 5px;
  background: #f5f5f5;
  border-bottom: 1px solid var(--soft-line);
  color: #222;
}

.detail-tools .green {
  margin-left: auto;
}

.detail-tools .btn + .btn {
  margin-left: -4px;
}

.scroll-area {
  display: flex;
  flex: 1;
}

.entry-form {
  display: grid;
  grid-template-columns: 149px 138px 156px 1fr;
  grid-template-rows: auto 1fr;
  flex: 1;
  padding: 11px 0 0 13px;
}

.field {
  margin-bottom: 4px;
}

.field label {
  display: block;
  color: var(--muted);
  font-size: 11px;
  line-height: 22px;
}

.field .req {
  font-weight: 600;
}

.req::before {
  content: "* ";
  color: #197b30;
  font-weight: bold;
}

.star {
  padding: 0 0 4px 3px;
  color: #197b30;
  font-weight: bold;
}

.hint {
  display: block;
  padding-left: 5px;
  color: var(--muted);
  line-height: 22px;
}

.col .box, .col .select {
  display: block;
  width: 101px;
}

.col:first-child .select {
  width: 104px;
}

.col .box.short, .extra .short {
  width: 80px;
  padding: 0 5px;
}

.col .short.num {
  padding-right: 9px;
}

.find {
  margin: 0 0 0 5px;
}

.checks {
  margin-top: -3px;
  padding-bottom: 1px;
}

.checks label {
  display: flex;
  align-items: center;
  gap: 4px;
  height: 22px;
  color: #555;
}

.col textarea {
  height: 154px;
  padding: 2px 8px;
}

.amounts .line span, .extra .line span {
  margin-left: 2px;
}

.receipt {
  position: relative;
  height: 270px;
  margin-top: -4px;
  border-left: 1px solid #bbb;
}

.flag {
  position: absolute;
  left: -12px;
  top: 77px;
  width: 21px;
  height: 63px;
  background: var(--navy);
  color: #fff;
  font-size: 11px;
  font-weight: bold;
  line-height: 21px;
  text-align: center;
}

.flag span {
  writing-mode: vertical-rl;
  transform: rotate(180deg);
  height: 63px;
}

.flag::before, .flag::after {
  content: "";
  position: absolute;
  left: 0;
  top: -5px;
  border-left: 11px solid transparent;
  border-bottom: 5px solid #021b26;
}

.flag::after {
  top: auto;
  bottom: -5px;
  border-bottom: 0;
  border-top: 5px solid #021b26;
}

.receipt-tools {
  display: flex;
  align-items: center;
  justify-content: space-between;
  height: 42px;
  padding: 0 2px 0 9px;
  color: #333;
}

.steps {
  display: flex;
  align-items: center;
  gap: 14px;
  margin-left: 8px;
}

.page {
  margin: 44px 0 0 27px;
}

.extra {
  grid-column: 1 / -1;
  margin: 6px 0 0 -5px;
}

.extra .field {
  margin: 0;
}

.extra .opp {
  width: 104px;
}

.v-track {
  width: 18px;
  padding: 17px 2px 0;
  background: linear-gradient(#999, #999) center 10px / 6px 3px no-repeat #f1f1f1;
}

.v-thumb {
  height: 470px;
  background: #c1c1c1;
}
```
